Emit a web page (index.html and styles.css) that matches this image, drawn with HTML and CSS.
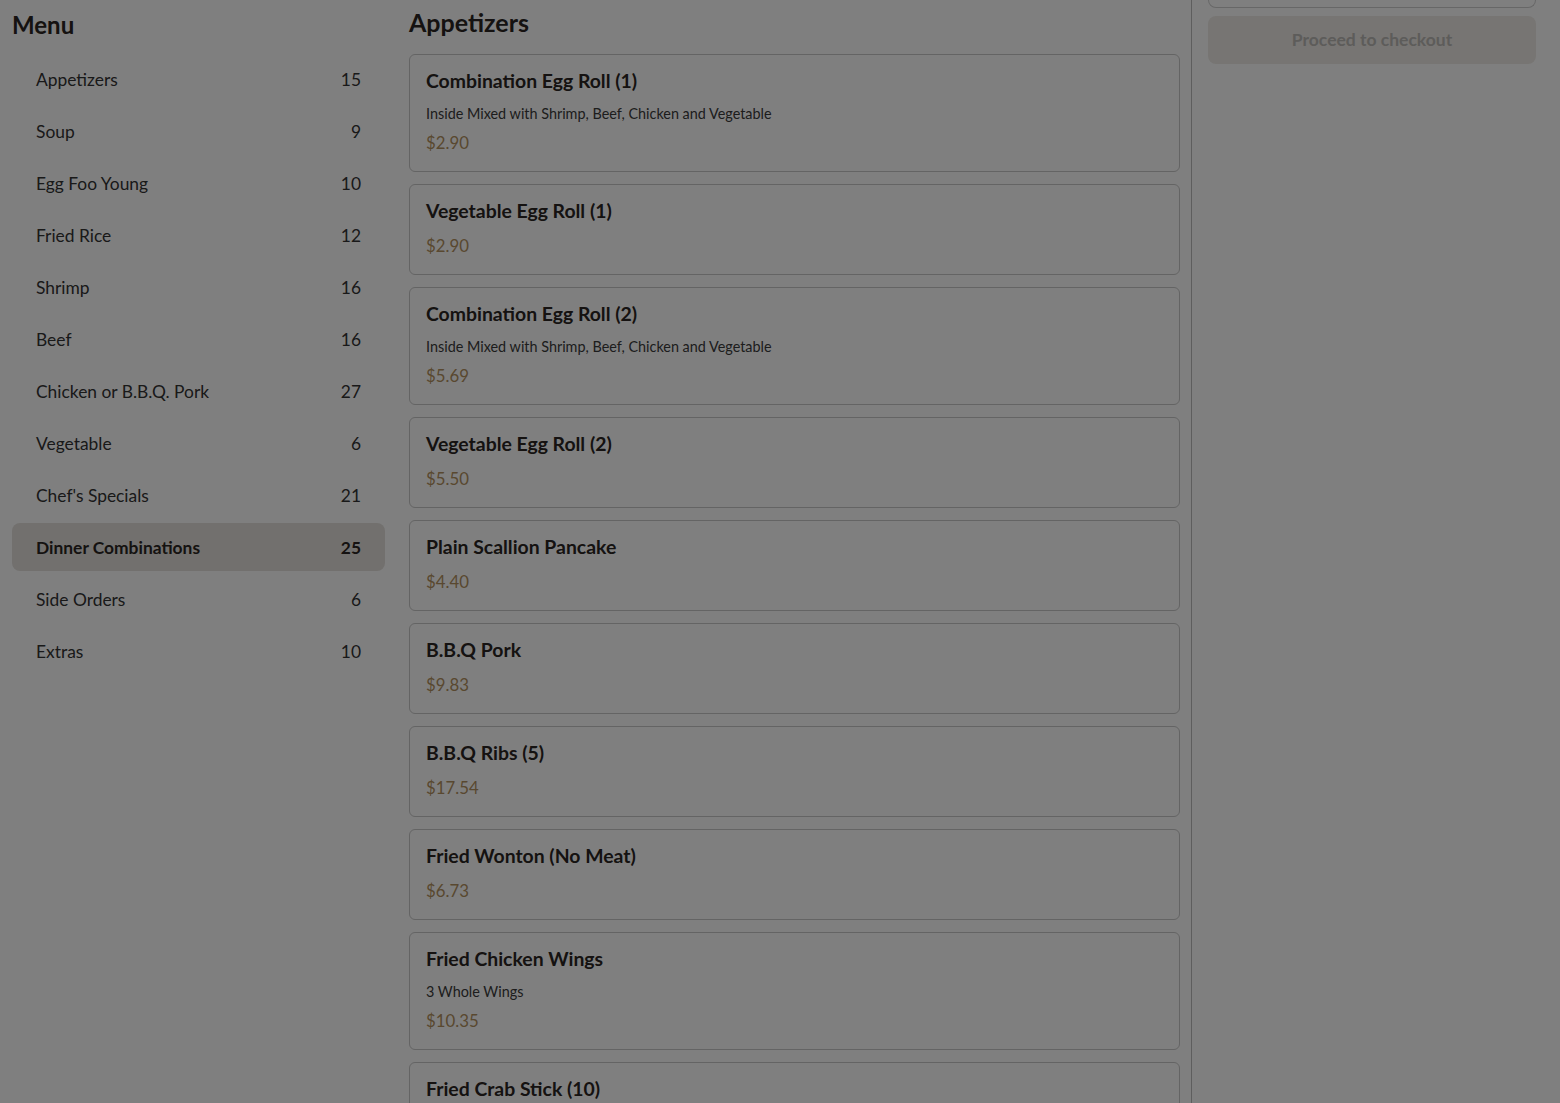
FILE: index.html
```html
<!DOCTYPE html>
<html lang="en">
<head>
<meta charset="utf-8">
<title>Menu</title>
<link rel="stylesheet" href="styles.css">
</head>
<body>
<div class="page">
  <nav class="sidebar">
    <h2 class="side-title">Menu</h2>
    <ul class="cats">
      <li class="cat"><span>Appetizers</span><span>15</span></li>
      <li class="cat"><span>Soup</span><span>9</span></li>
      <li class="cat"><span>Egg Foo Young</span><span>10</span></li>
      <li class="cat"><span>Fried Rice</span><span>12</span></li>
      <li class="cat"><span>Shrimp</span><span>16</span></li>
      <li class="cat"><span>Beef</span><span>16</span></li>
      <li class="cat"><span>Chicken or B.B.Q. Pork</span><span>27</span></li>
      <li class="cat"><span>Vegetable</span><span>6</span></li>
      <li class="cat"><span>Chef's Specials</span><span>21</span></li>
      <li class="cat active"><span>Dinner Combinations</span><span>25</span></li>
      <li class="cat"><span>Side Orders</span><span>6</span></li>
      <li class="cat"><span>Extras</span><span>10</span></li>
    </ul>
  </nav>
  <main class="main">
    <h2 class="section-title">Appetizers</h2>
    <div class="items">
      <div class="card"><div class="name">Combination Egg Roll (1)</div><div class="desc">Inside Mixed with Shrimp, Beef, Chicken and Vegetable</div><div class="price">$2.90</div></div>
      <div class="card"><div class="name">Vegetable Egg Roll (1)</div><div class="price">$2.90</div></div>
      <div class="card"><div class="name">Combination Egg Roll (2)</div><div class="desc">Inside Mixed with Shrimp, Beef, Chicken and Vegetable</div><div class="price">$5.69</div></div>
      <div class="card"><div class="name">Vegetable Egg Roll (2)</div><div class="price">$5.50</div></div>
      <div class="card"><div class="name">Plain Scallion Pancake</div><div class="price">$4.40</div></div>
      <div class="card"><div class="name">B.B.Q Pork</div><div class="price">$9.83</div></div>
      <div class="card"><div class="name">B.B.Q Ribs (5)</div><div class="price">$17.54</div></div>
      <div class="card"><div class="name">Fried Wonton (No Meat)</div><div class="price">$6.73</div></div>
      <div class="card"><div class="name">Fried Chicken Wings</div><div class="desc">3 Whole Wings</div><div class="price">$10.35</div></div>
      <div class="card"><div class="name">Fried Crab Stick (10)</div><div class="price">$8.50</div></div>
    </div>
  </main>
  <aside class="cart">
    <div class="cart-box"></div>
    <button class="checkout" disabled>Proceed to checkout</button>
  </aside>
</div>
<div class="backdrop"></div>
</body>
</html>
```
FILE: styles.css
```css
html, body {
  margin: 0;
  padding: 0;
  height: 100%;
  overflow: hidden;
}
body {
  background: #ffffff;
  color: #333333;
  font-family: "Lato", "Noto Sans", "Liberation Sans", sans-serif;
}
.page {
  display: flex;
  align-items: flex-start;
  padding-left: 12px;
  height: 100%;
}
.sidebar {
  flex: 0 0 373px;
}
.side-title {
  margin: 9px 0 14px 0;
  font-size: 24px;
  line-height: 32px;
  font-weight: 700;
  color: #2a2522;
}
.cats {
  list-style: none;
  margin: 0;
  padding: 0;
  display: flex;
  flex-direction: column;
  gap: 4px;
}
.cat {
  height: 48px;
  display: flex;
  align-items: center;
  justify-content: space-between;
  padding: 0 24px;
  font-size: 17.4px;
  border-radius: 8px;
  color: #333;
}
.cat.active {
  background: #e5e1dd;
  font-weight: 700;
  color: #2a2522;
}
.main {
  flex: 0 0 771px;
  margin: 0 11px 0 24px;
}
.section-title {
  margin: 6px 0 16px 0;
  font-size: 25px;
  line-height: 32px;
  font-weight: 700;
  color: #2a2522;
}
.items {
  display: flex;
  flex-direction: column;
  gap: 12px;
}
.card {
  border: 1px solid #c8c8c8;
  border-radius: 6px;
  padding: 15px 16px 17px 16px;
  background: #fff;
}
.name {
  font-size: 19.4px;
  line-height: 22px;
  font-weight: 700;
  color: #2a2522;
}
.desc {
  margin-top: 12px;
  font-size: 14.4px;
  line-height: 20px;
  color: #3a3a3a;
}
.price {
  margin-top: 13px;
  font-size: 16.8px;
  line-height: 22px;
  color: #b39160;
}
.desc + .price {
  margin-top: 8px;
}
.cart {
  flex: 1;
  align-self: stretch;
  border-left: 1px solid #bdbdbd;
  padding: 0 24px 0 16px;
}
.cart-box {
  height: 7px;
  border: 1px solid #cfcfcf;
  border-top: none;
  border-radius: 0 0 8px 8px;
}
.checkout {
  display: block;
  width: 100%;
  height: 48px;
  margin-top: 8px;
  padding-bottom: 2px;
  border: none;
  border-radius: 8px;
  background: #eeebe6;
  color: #bab8b5;
  font-family: inherit;
  font-size: 17.5px;
  font-weight: 700;
}
.backdrop {
  position: fixed;
  inset: 0;
  background: rgba(0, 0, 0, 0.5);
}
```
